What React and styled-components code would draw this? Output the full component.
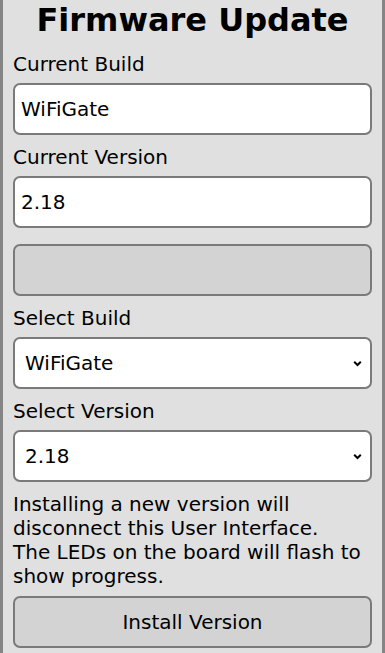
import React from 'react';
import styled, { createGlobalStyle } from 'styled-components';

const GlobalStyle = createGlobalStyle`
  html, body {
    margin: 0;
    padding: 0;
    background: #e0e0e0;
  }
  body {
    font-family: "DejaVu Sans", Verdana, sans-serif;
    color: #000;
  }
`;

const Panel = styled.div`
  box-sizing: border-box;
  width: 385px;
  min-height: 653px;
  display: flex;
  flex-direction: column;
  background: #e0e0e0;
  border-left: 3px solid #858585;
  border-right: 3px solid #858585;
  padding: 0 10px 10px 10px;
`;

const Title = styled.h1`
  margin: 0 0 3px 0;
  padding-top: 1px;
  font-size: 32px;
  line-height: 38px;
  font-weight: bold;
  text-align: center;
`;

const Label = styled.div`
  font-size: 20px;
  line-height: 24px;
  margin-top: 10px;
  margin-bottom: 7px;
`;

const Field = styled.div`
  box-sizing: border-box;
  height: 52px;
  border: 2px solid #7a7a7a;
  border-radius: 7px;
  background: ${(p) => (p.$muted ? '#d3d3d3' : '#fff')};
  display: flex;
  align-items: center;
  padding: 0 6px 0 ${(p) => (p.$select ? '10px' : '6px')};
  font-size: 20px;
  margin-top: ${(p) => (p.$gap ? '16px' : '0')};
`;

const FieldText = styled.span`
  flex: 1;
`;

const Chevron = styled.svg`
  width: 9px;
  height: 7px;
  margin-right: 2px;
`;

const Note = styled.p`
  margin: 10px 0 8px 0;
  font-size: 20px;
  line-height: 24px;
`;

const Button = styled.div`
  box-sizing: border-box;
  height: 52px;
  border: 2px solid #7a7a7a;
  border-radius: 7px;
  background: #d3d3d3;
  display: flex;
  align-items: center;
  justify-content: center;
  font-size: 20px;
`;

function Select({ value }) {
  return (
    <Field $select>
      <FieldText>{value}</FieldText>
      <Chevron viewBox="0 0 9 7">
        <path d="M1.2 1.8 L4.5 5 L7.8 1.8" fill="none" stroke="#000" strokeWidth="2" />
      </Chevron>
    </Field>
  );
}

export default function App() {
  return (
    <>
      <GlobalStyle />
      <Panel>
        <Title>Firmware Update</Title>
        <Label>Current Build</Label>
        <Field>WiFiGate</Field>
        <Label>Current Version</Label>
        <Field>2.18</Field>
        <Field $muted $gap />
        <Label>Select Build</Label>
        <Select value="WiFiGate" />
        <Label>Select Version</Label>
        <Select value="2.18" />
        <Note>
          Installing a new version will disconnect this User Interface.
          <br />
          The LEDs on the board will flash to show progress.
        </Note>
        <Button>Install Version</Button>
      </Panel>
    </>
  );
}
